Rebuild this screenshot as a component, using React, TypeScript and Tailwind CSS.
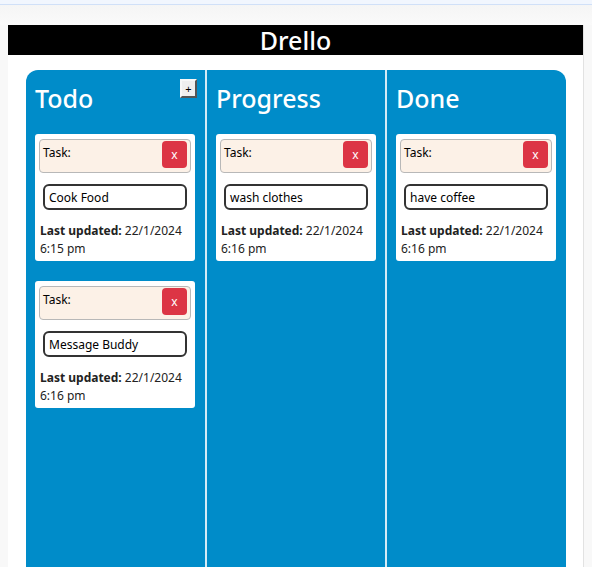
import React from "react";

type Task = { text: string; time: string };

const font = { fontFamily: '"Noto Sans", "Open Sans", sans-serif' };

function Card({ task }: { task: Task }) {
  return (
    <div className="bg-white rounded-[3px] px-[4px] pt-[5px] pb-[3px] w-[160px]">
      <div className="flex justify-between items-start h-[34px] bg-[#fcf1e7] border border-[#b8b8b8] rounded-[4px] pl-[3px] pr-[3px] pt-[1px]">
        <span className="text-[12px] text-black leading-[16px] mt-[4px]">Task:</span>
        <button className="w-[25px] h-[27px] bg-[#dc3545] rounded-[4px] text-white text-[12px] leading-none flex items-center justify-center">
          x
        </button>
      </div>
      <div className="mt-[11px] ml-[4px] w-[144px] h-[26px] border-2 border-[#333] rounded-[6px] flex items-center pl-[4px] pt-[2px] text-[12px] text-black">
        {task.text}
      </div>
      <div className="mt-[12px] ml-[1px] text-[12px] leading-[18px] text-[#222]">
        <span className="font-bold">Last updated:</span> 22/1/2024
        <br />
        {task.time}
      </div>
    </div>
  );
}

function Column({
  title,
  tasks,
  plus,
  width,
}: {
  title: string;
  tasks: Task[];
  plus?: boolean;
  width: string;
}) {
  return (
    <div className={`${width} pl-[9px] pr-[10px]`}>
      <div className="flex justify-between items-start h-[64px]">
        <h2 className="text-white text-[25px] font-medium leading-none mt-[16px]">{title}</h2>
        {plus && (
          <button className="mt-[9px] w-[17px] h-[19px] bg-[#efefef] border-2 border-t-[#f8f8f8] border-l-[#f8f8f8] border-r-[#555] border-b-[#555] text-[11px] leading-none text-black flex items-center justify-center -mr-[2px]">
            +
          </button>
        )}
      </div>
      <div className="flex flex-col gap-[20px]">
        {tasks.map((t, i) => (
          <Card key={i} task={t} />
        ))}
      </div>
    </div>
  );
}

export default function App() {
  return (
    <div className="min-h-[567px] bg-[#f8f8f8] overflow-hidden" style={font}>
      <div className="h-[5px] bg-[#f1f6fe] border-b border-[#d0e0f8]" />
      <div className="h-[20px] bg-gradient-to-b from-[#f5f5f5] to-[#fafafa]" />
      <div className="ml-[8px] w-[576px] bg-white border-r border-[#e2e2e2] min-h-[560px]">
        <div className="h-[30px] bg-black text-white text-[25px] font-medium leading-[30px] text-center">
          Drello
        </div>
        <div className="pt-[15px] pl-[18px] pr-[17px]">
          <div className="flex bg-[#008cc9] rounded-t-[12px] min-h-[520px]">
            <Column
              width="w-[179px]"
              title="Todo"
              plus
              tasks={[
                { text: "Cook Food", time: "6:15 pm" },
                { text: "Message Buddy", time: "6:16 pm" },
              ]}
            />
            <div className="w-[2px] bg-[#d4ebf6]" />
            <Column
              width="w-[178px]"
              title="Progress"
              tasks={[{ text: "wash clothes", time: "6:16 pm" }]}
            />
            <div className="w-[2px] bg-[#d4ebf6]" />
            <Column
              width="w-[179px]"
              title="Done"
              tasks={[{ text: "have coffee", time: "6:16 pm" }]}
            />
          </div>
        </div>
      </div>
    </div>
  );
}
